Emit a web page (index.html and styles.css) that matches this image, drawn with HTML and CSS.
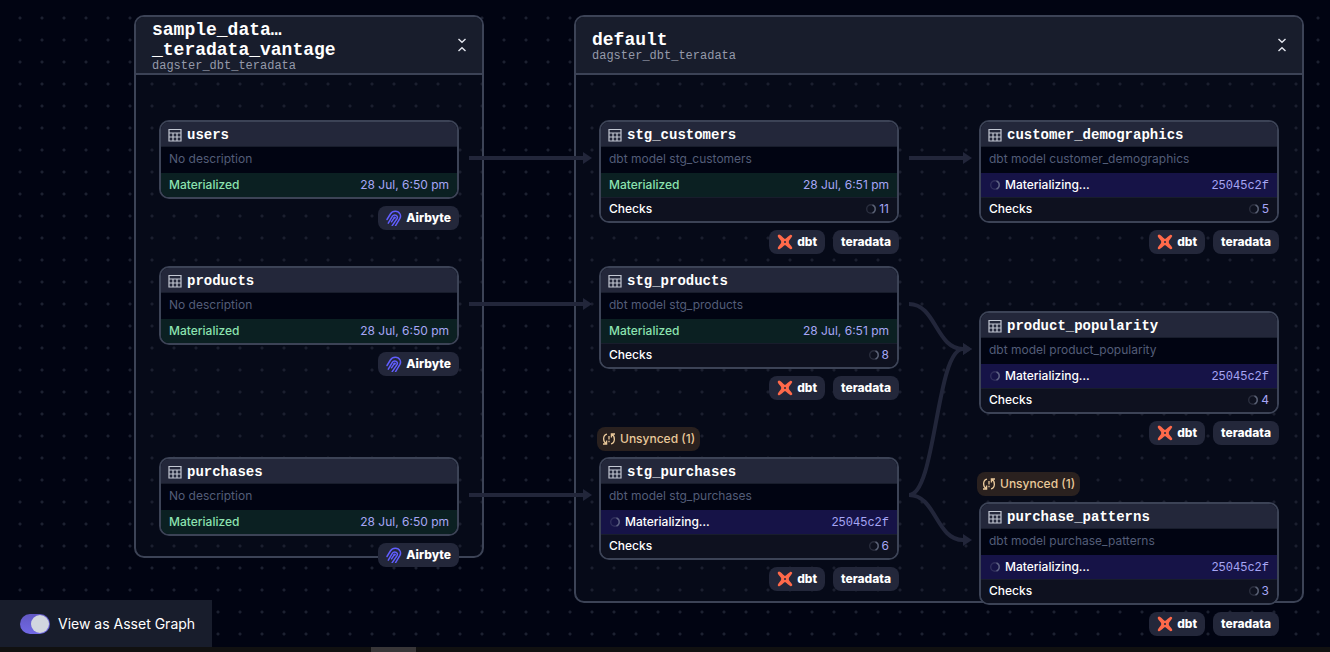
FILE: index.html
```html
<!DOCTYPE html>
<html lang="en">
<head>
<meta charset="utf-8">
<title>Asset graph</title>
<link rel="stylesheet" href="styles.css">
</head>
<body>
<svg class="defs" aria-hidden="true">
  <symbol id="table" viewBox="0 0 14 14"><path d="M1 1.500h12v11.500h-12zM1 5h12M1 9h12M5 5v8M9 5v8" fill="none" stroke="currentColor" stroke-width="1.200"/></symbol>
  <symbol id="collapse" viewBox="0 0 16 16"><path d="M4.500 2 8 5.300 11.500 2M4.500 14 8 10.700 11.500 14" fill="none" stroke="currentColor" stroke-width="1.400"/></symbol>
  <symbol id="airbyte" viewBox="0 0 16 16"><path d="M1 9.500 4.400 4C6.600.500 12 .300 14 4c.9 1.700.6 3.300-.2 4.700L9.600 15.600M2.300 13.200 6.300 6.400c1.100-1.900 3.900-1.900 4.900 0 .4.900.2 1.700-.3 2.500L6.200 15.600M5.500 11.800 8.200 7.800" fill="none" stroke="#615eff" stroke-width="1.500" stroke-linecap="round"/><circle cx="8.700" cy="7.600" r="1.200" fill="#615eff"/></symbol>
  <symbol id="dbt" viewBox="0 0 16 16"><path d="M2.600.700C4.600 1.500 6 3.900 8 4.900c2-1 3.600-3.200 5.500-4.200.9-.3 2 .700 1.700 1.600C14.200 4.500 11.900 6 11.700 8c.2 2 2.500 3.500 3.500 5.600.4 1-.7 2-1.600 1.700C11.600 14.400 10 12.100 8 11.100c-2 1-3.500 3.300-5.600 4.200-1 .3-1.900-.7-1.600-1.600C1.600 11.500 4.100 10 4.300 8 4.100 6 1.600 4.600.8 2.500.400 1.400 1.600.300 2.600.700z" fill="#ff694a"/><circle cx="8" cy="8" r="1" fill="#23273a"/></symbol>
  <symbol id="unsynced" viewBox="0 0 14 14"><path d="M5 2.200C.8 3 .5 9.500 4.200 11.600M1 12h3.600V8.600M9 11.800C13.200 11 13.500 4.500 9.800 2.400M13 2H9.400v3.400M7 4v3.600M7 8.800v1.500" fill="none" stroke="currentColor" stroke-width="1.300"/></symbol>
  <symbol id="spinner" viewBox="0 0 12 12"><circle cx="6" cy="6" r="4.300" fill="none" stroke="#8b93a8" stroke-opacity=".22" stroke-width="1.400"/><path d="M7.500 2a4.300 4.300 0 0 1 0 8" fill="none" stroke="#7d859c" stroke-opacity=".6" stroke-width="1.400"/></symbol>
</svg>

<main class="canvas">
  <section class="group group-source">
    <header class="group-head">
      <div><h2>sample_data…<br>_teradata_vantage</h2><p>dagster_dbt_teradata</p></div>
      <button class="collapse" aria-label="Collapse sample_data_teradata_vantage"><svg><use href="#collapse"/></svg></button>
    </header>
  </section>
  <section class="group group-default">
    <header class="group-head">
      <div><h2>default</h2><p>dagster_dbt_teradata</p></div>
      <button class="collapse" aria-label="Collapse default"><svg><use href="#collapse"/></svg></button>
    </header>
  </section>

  <svg class="edges" aria-hidden="true">
    <defs><marker id="arrow" viewBox="0 0 9 12" refX="0" refY="6" markerWidth="9" markerHeight="12" markerUnits="userSpaceOnUse" orient="auto"><path d="M0 0 9 6 0 12z"/></marker></defs>
    <path d="M469 158H583"/>
    <path d="M469 304H583"/>
    <path d="M469 495H583"/>
    <path d="M909 158H963"/>
    <path d="M909 304C936 304 936 349 963 349"/>
    <path d="M909 495C936 495 936 349 963 349"/>
    <path d="M909 495C936 495 936 540 963 540"/>
  </svg>

  <article class="node users">
    <div class="card">
      <h3><svg><use href="#table"/></svg>users</h3>
      <p class="desc">No description</p>
      <div class="row done"><span>Materialized</span><a href="#">28 Jul, 6:50 pm</a></div>
    </div>
    <div class="tags"><span class="tag"><svg><use href="#airbyte"/></svg>Airbyte</span></div>
  </article>
  <article class="node products">
    <div class="card">
      <h3><svg><use href="#table"/></svg>products</h3>
      <p class="desc">No description</p>
      <div class="row done"><span>Materialized</span><a href="#">28 Jul, 6:50 pm</a></div>
    </div>
    <div class="tags"><span class="tag"><svg><use href="#airbyte"/></svg>Airbyte</span></div>
  </article>
  <article class="node purchases">
    <div class="card">
      <h3><svg><use href="#table"/></svg>purchases</h3>
      <p class="desc">No description</p>
      <div class="row done"><span>Materialized</span><a href="#">28 Jul, 6:50 pm</a></div>
    </div>
    <div class="tags"><span class="tag"><svg><use href="#airbyte"/></svg>Airbyte</span></div>
  </article>

  <article class="node stg-customers">
    <div class="card">
      <h3><svg><use href="#table"/></svg>stg_customers</h3>
      <p class="desc">dbt model stg_customers</p>
      <div class="row done"><span>Materialized</span><a href="#">28 Jul, 6:51 pm</a></div>
      <div class="row checks"><span>Checks</span><a href="#"><svg><use href="#spinner"/></svg>11</a></div>
    </div>
    <div class="tags"><span class="tag"><svg><use href="#dbt"/></svg>dbt</span><span class="tag">teradata</span></div>
  </article>
  <article class="node stg-products">
    <div class="card">
      <h3><svg><use href="#table"/></svg>stg_products</h3>
      <p class="desc">dbt model stg_products</p>
      <div class="row done"><span>Materialized</span><a href="#">28 Jul, 6:51 pm</a></div>
      <div class="row checks"><span>Checks</span><a href="#"><svg><use href="#spinner"/></svg>8</a></div>
    </div>
    <div class="tags"><span class="tag"><svg><use href="#dbt"/></svg>dbt</span><span class="tag">teradata</span></div>
  </article>
  <article class="node stg-purchases">
    <span class="unsynced"><svg><use href="#unsynced"/></svg>Unsynced (1)</span>
    <div class="card">
      <h3><svg><use href="#table"/></svg>stg_purchases</h3>
      <p class="desc">dbt model stg_purchases</p>
      <div class="row running"><span><svg><use href="#spinner"/></svg>Materializing…</span><a class="run" href="#">25045c2f</a></div>
      <div class="row checks"><span>Checks</span><a href="#"><svg><use href="#spinner"/></svg>6</a></div>
    </div>
    <div class="tags"><span class="tag"><svg><use href="#dbt"/></svg>dbt</span><span class="tag">teradata</span></div>
  </article>

  <article class="node customer-demographics">
    <div class="card">
      <h3><svg><use href="#table"/></svg>customer_demographics</h3>
      <p class="desc">dbt model customer_demographics</p>
      <div class="row running"><span><svg><use href="#spinner"/></svg>Materializing…</span><a class="run" href="#">25045c2f</a></div>
      <div class="row checks"><span>Checks</span><a href="#"><svg><use href="#spinner"/></svg>5</a></div>
    </div>
    <div class="tags"><span class="tag"><svg><use href="#dbt"/></svg>dbt</span><span class="tag">teradata</span></div>
  </article>
  <article class="node product-popularity">
    <div class="card">
      <h3><svg><use href="#table"/></svg>product_popularity</h3>
      <p class="desc">dbt model product_popularity</p>
      <div class="row running"><span><svg><use href="#spinner"/></svg>Materializing…</span><a class="run" href="#">25045c2f</a></div>
      <div class="row checks"><span>Checks</span><a href="#"><svg><use href="#spinner"/></svg>4</a></div>
    </div>
    <div class="tags"><span class="tag"><svg><use href="#dbt"/></svg>dbt</span><span class="tag">teradata</span></div>
  </article>
  <article class="node purchase-patterns">
    <span class="unsynced"><svg><use href="#unsynced"/></svg>Unsynced (1)</span>
    <div class="card">
      <h3><svg><use href="#table"/></svg>purchase_patterns</h3>
      <p class="desc">dbt model purchase_patterns</p>
      <div class="row running"><span><svg><use href="#spinner"/></svg>Materializing…</span><a class="run" href="#">25045c2f</a></div>
      <div class="row checks"><span>Checks</span><a href="#"><svg><use href="#spinner"/></svg>3</a></div>
    </div>
    <div class="tags"><span class="tag"><svg><use href="#dbt"/></svg>dbt</span><span class="tag">teradata</span></div>
  </article>

  <label class="view-toggle" for="asset-view"><input type="checkbox" id="asset-view" checked>View as Asset Graph</label>
</main>
<div class="scroll-track"><div class="scroll-thumb"></div></div>
</body>
</html>
```
FILE: styles.css
```css
* { box-sizing: border-box; }

body {
  margin: 0;
  height: 100vh;
  display: flex;
  flex-direction: column;
  overflow: hidden;
  background: #010412;
  color: #fff;
  font: 500 12px/16px Inter, "Liberation Sans", sans-serif;
}

h2, h3, p { margin: 0; }
a { color: #a7a6f5; text-decoration: none; }
svg { display: block; flex: none; }
.defs { position: absolute; width: 0; height: 0; }

.canvas {
  position: relative;
  flex: 1;
  overflow: hidden;
  background: radial-gradient(circle at 11px 11px, #1c2131 1px, transparent 2px) 9px 7px / 22px 22px;
}

.group {
  position: absolute;
  top: 15px;
  border: 2px solid #3c4356;
  border-radius: 10px;
  background: rgba(23, 28, 42, 0.25);
}
.group-source { left: 134px; width: 350px; height: 543px; }
.group-default { left: 574px; width: 730px; height: 588px; }

.group-head {
  display: flex;
  align-items: center;
  justify-content: space-between;
  height: 58px;
  padding: 0 12px 0 16px;
  border-bottom: 2px solid #3c4356;
  border-radius: 8px 8px 0 0;
  background: #181d2c;
}
.group-head div { padding-top: 2px; }
.group-head h2 { font: 700 18px/20px "Liberation Mono", monospace; }
.group-head p { font: 400 12px/12px "Liberation Mono", monospace; color: #959aaa; }
.collapse { padding: 0; border: 0; background: none; color: #e3e6ee; }
.collapse svg { width: 16px; height: 16px; }

.edges { position: absolute; inset: 0; width: 100%; height: 100%; fill: none; stroke: #22263a; stroke-width: 4; }
.edges > path { marker-end: url(#arrow); }
.edges marker path { fill: #22263a; stroke: none; }

.node { position: absolute; width: 300px; }
.users { left: 159px; top: 120px; }
.products { left: 159px; top: 266px; }
.purchases { left: 159px; top: 457px; }
.stg-customers { left: 599px; top: 120px; }
.stg-products { left: 599px; top: 266px; }
.stg-purchases { left: 599px; top: 457px; }
.customer-demographics { left: 979px; top: 120px; }
.product-popularity { left: 979px; top: 311px; }
.purchase-patterns { left: 979px; top: 502px; }

.card {
  overflow: hidden;
  border: 2px solid #3c4356;
  border-radius: 10px;
  background: #010412;
}
.card h3 {
  display: flex;
  align-items: center;
  gap: 5px;
  height: 25px;
  padding: 1px 7px 0;
  border-bottom: 1px solid #181d2c;
  background: #23273a;
  font: 700 14px/24px "Liberation Mono", monospace;
}
.card h3 svg { width: 14px; height: 14px; color: #c3c8d3; }
.desc { padding: 4px 8px 6px; font-weight: 400; color: #535d78; }
.row {
  display: flex;
  align-items: center;
  justify-content: space-between;
  height: 24px;
  padding: 0 8px;
}
.row span, .row a { display: flex; align-items: center; }
.row svg { width: 12px; height: 12px; }
.done { background: #0b2022; color: #8ce3b0; }
.row a { font-weight: 400; }
.running { background: #161347; }
.running span { gap: 4px; }
.running .run { padding-top: 2px; font: 400 12px/16px "Liberation Mono", monospace; }
.row.checks { padding-bottom: 2px; border-top: 1px solid #181d2c; background: #0e111f; }
.checks a { gap: 2px; }

.tags { display: flex; justify-content: flex-end; gap: 8px; padding-top: 7px; }
.tag {
  display: flex;
  align-items: center;
  gap: 4px;
  height: 24px;
  padding: 0 8px;
  border-radius: 8px;
  background: #23273a;
  font-weight: 800;
}
.tag svg { width: 16px; height: 16px; }

.unsynced {
  position: absolute;
  left: -2px;
  top: -30px;
  display: flex;
  align-items: center;
  gap: 4px;
  height: 24px;
  padding: 0 5px;
  border-radius: 8px;
  background: #2a211f;
  color: #e9c89a;
}
.unsynced svg { width: 14px; height: 14px; }

.view-toggle {
  position: absolute;
  left: 0;
  bottom: 0;
  display: flex;
  align-items: center;
  gap: 8px;
  height: 47px;
  padding: 0 17px 0 20px;
  background: #181d2c;
  font: 400 14px/20px Inter, "Liberation Sans", sans-serif;
}
.view-toggle input {
  appearance: none;
  display: flex;
  justify-content: flex-end;
  width: 30px;
  height: 20px;
  margin: 0;
  padding: 1px;
  border-radius: 10px;
  background: linear-gradient(#6258c4, #7169e6);
}
.view-toggle input::before { content: ""; width: 18px; height: 18px; border-radius: 50%; background: #d2d6df; }
.view-toggle input:not(:checked) { justify-content: flex-start; background: #3c4356; }

.scroll-track { height: 5px; padding-left: 371px; background: #111; }
.scroll-thumb { width: 45px; height: 5px; background: #383638; }
```
